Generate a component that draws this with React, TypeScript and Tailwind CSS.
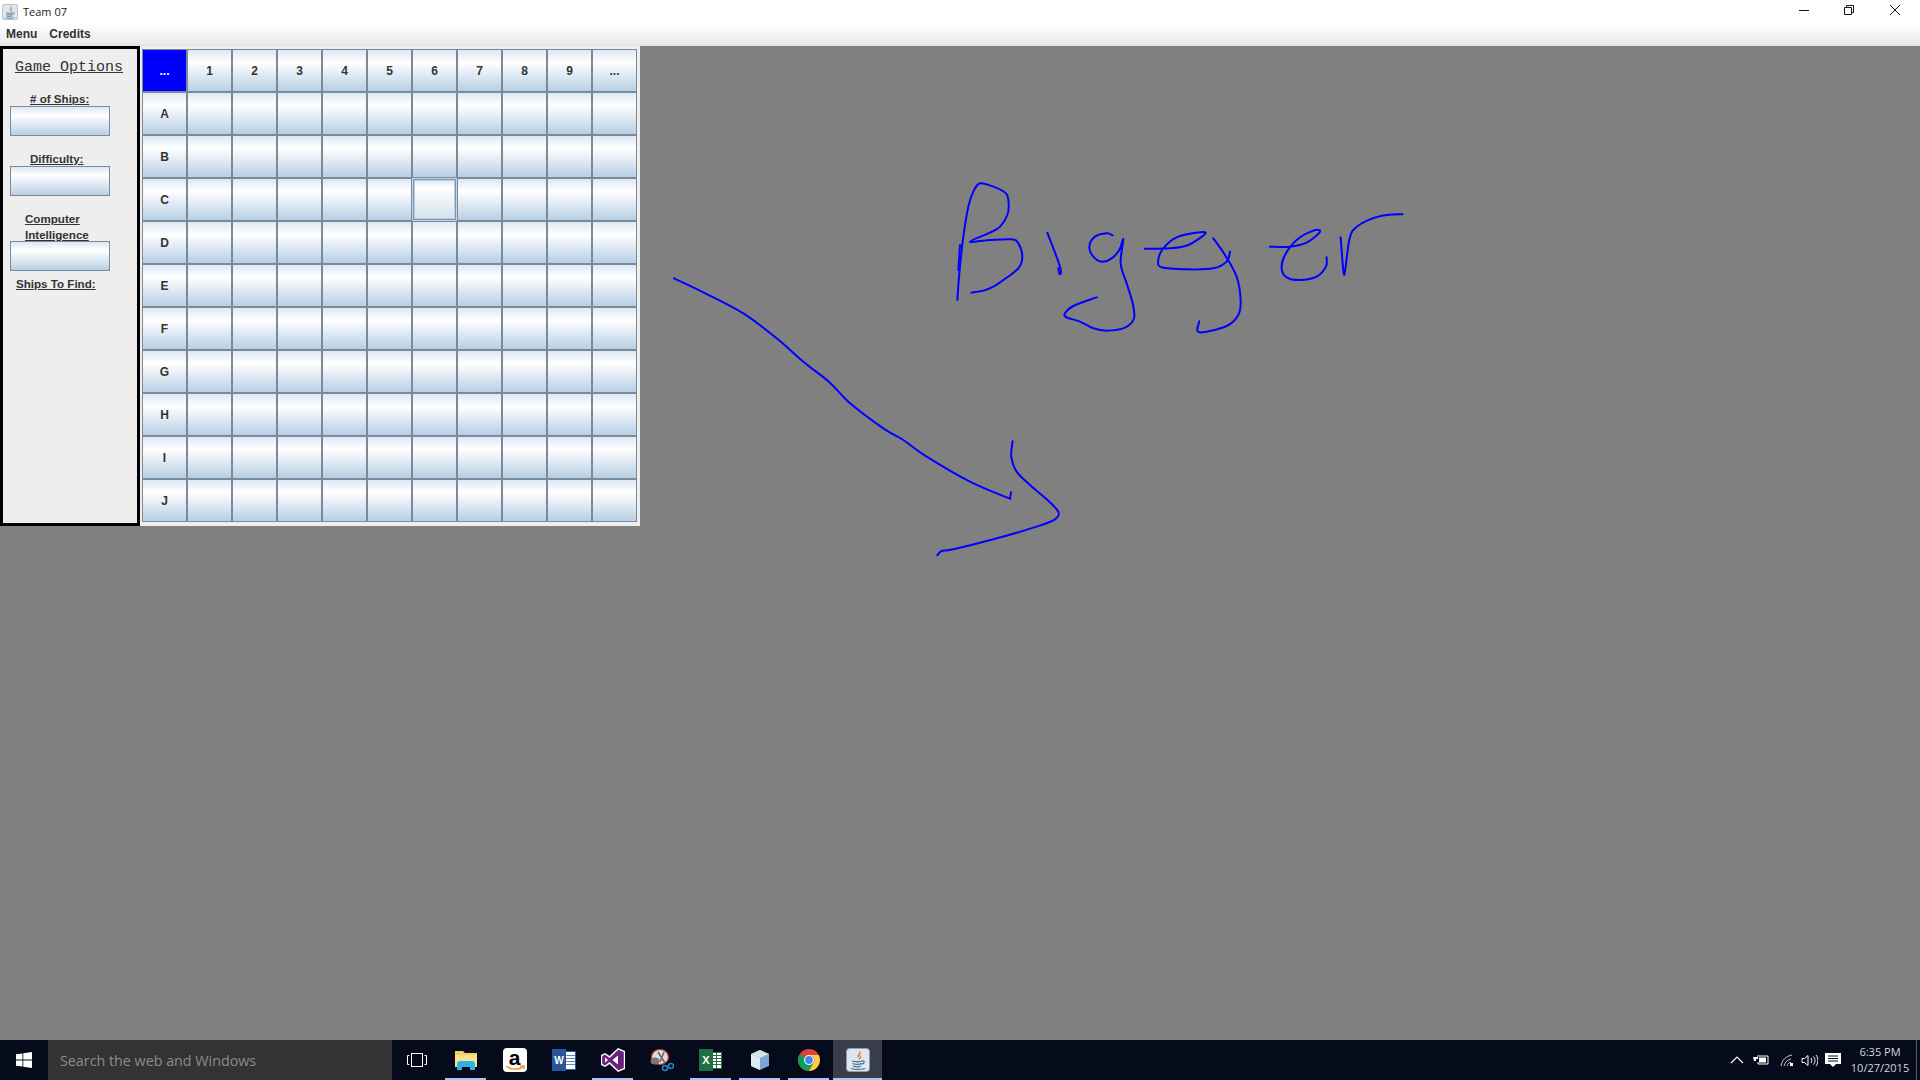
const rowLabels = ['A', 'B', 'C', 'D', 'E', 'F', 'G', 'H', 'I', 'J'];
const colLabels = ['1', '2', '3', '4', '5', '6', '7', '8', '9', '...'];

const oceanGradient = 'bg-[linear-gradient(180deg,#dde8f3_0%,#ffffff_30%,#b8cfe5_100%)]';

// Catmull-Rom through the traced points, so the ink does not look polygonal
function smooth(points: number[][]): string {
  let d = `M${points[0][0]} ${points[0][1]}`;
  for (let i = 0; i < points.length - 1; i++) {
    const p0 = points[i - 1] || points[i];
    const p1 = points[i];
    const p2 = points[i + 1];
    const p3 = points[i + 2] || p2;
    const c1x = p1[0] + (p2[0] - p0[0]) / 6;
    const c1y = p1[1] + (p2[1] - p0[1]) / 6;
    const c2x = p2[0] - (p3[0] - p1[0]) / 6;
    const c2y = p2[1] - (p3[1] - p1[1]) / 6;
    d += ` C${c1x} ${c1y} ${c2x} ${c2y} ${p2[0]} ${p2[1]}`;
  }
  return d;
}

const wordStrokes: number[][][] = [
  [[82, 420], [88, 340], [100, 230], [115, 140], [130, 95], [150, 70], [190, 80], [228, 100], [236, 130], [232, 165], [210, 200], [180, 218], [120, 245], [180, 240], [245, 238], [265, 250], [277, 290], [265, 325], [220, 360], [190, 380], [160, 392], [124, 398]],
  [[90, 255], [85, 330]],
  [[352, 218], [385, 305], [393, 335], [388, 342], [385, 325]],
  [[548, 226], [530, 220], [495, 230], [478, 260], [490, 290], [515, 305], [545, 295], [568, 270], [580, 238], [572, 310], [590, 370], [608, 430], [612, 475], [585, 503], [530, 512], [490, 505], [450, 485], [410, 472], [405, 460], [430, 438], [500, 412]],
  [[645, 266], [720, 265], [775, 255], [825, 222], [810, 217], [740, 232], [700, 265], [685, 300], [695, 322], [770, 328], [850, 325], [890, 305], [900, 275]],
  [[850, 235], [885, 285], [920, 350], [932, 420], [925, 465], [890, 498], [808, 517], [808, 484]],
  [[1020, 260], [1080, 260], [1130, 248], [1170, 215], [1150, 212], [1100, 240], [1065, 285], [1055, 325], [1070, 352], [1110, 360], [1160, 350], [1188, 320], [1190, 292]],
  [[1232, 232], [1240, 330], [1245, 335], [1258, 240], [1275, 205], [1320, 178], [1370, 165], [1418, 163]],
];

const arrowStrokes: number[][][] = [
  [[42, 55], [130, 97], [250, 160], [350, 235], [430, 305], [510, 368], [565, 425], [670, 505], [730, 540], [800, 590], [930, 665], [1040, 712], [1050, 712], [1053, 697]],
  [[1058, 544], [1054, 590], [1070, 635], [1110, 675], [1160, 718], [1195, 755], [1185, 778], [1130, 800], [1000, 838], [880, 868], [845, 873], [832, 886]],
];

function JavaIcon({ size }: { size: number }) {
  return (
    <svg width={size} height={size} viewBox="0 0 24 24">
      <rect x="0.5" y="0.5" width="23" height="23" rx="3" fill="#dfe6ee" stroke="#8aa0b8" />
      <path d="M13 3c2 3-3 4-1 7 .5-2 4-3 2-7z" fill="#e8761c" />
      <path d="M15 7c0 2-3 3-2 5 .5-1 3-2 2-5z" fill="#d9531e" />
      <path d="M6 13c3 1 8 1 10 0M6.500 15.500c3 1 7 1 9 0M7 18c2 .8 6 .8 8 0" fill="none" stroke="#4a7196" strokeWidth="1.300" />
      <path d="M16 13c3-1 3 3-1 3" fill="none" stroke="#4a7196" strokeWidth="1.200" />
      <path d="M5 20.500c3 1.200 11 1.200 14 0" fill="none" stroke="#4a7196" strokeWidth="1.200" />
    </svg>
  );
}

function Cell({ label, selected, focused }: { label?: string; selected?: boolean; focused?: boolean }) {
  if (selected) {
    return (
      <div className="flex items-center justify-center bg-[#0000ff] text-[12px] font-bold text-white">{label}</div>
    );
  }
  if (focused) {
    return (
      <div className="relative z-10 bg-[linear-gradient(180deg,#dde8f3_0%,#ffffff_20%,#d3e0ee_100%)] border border-[#7f96b3] shadow-[0_0_0_1px_#c3d3e4,inset_0_0_0_1px_#b9cde3]" />
    );
  }
  return (
    <div className={`${oceanGradient} flex items-center justify-center text-[12px] font-bold text-[#333333]`}>{label}</div>
  );
}

function SideLabel({ className, children }: { className: string; children: string }) {
  return <div className={`text-[11.6px] leading-[15px] font-bold text-[#333333] underline ${className}`}>{children}</div>;
}

function EmptyBox() {
  return <div className={`ml-[7px] h-[30px] w-[100px] shrink-0 border border-[#7a8a99] ${oceanGradient}`} />;
}

function TaskIcon({ active, open, children }: { active?: boolean; open?: boolean; children: React.ReactNode }) {
  return (
    <div className={`relative flex h-[40px] w-[49px] shrink-0 items-center justify-center ${active ? 'bg-[#3a3e4b]' : ''}`}>
      {children}
      {(open || active) && (
        <div className={`absolute bottom-0 h-[2px] bg-[#a9c4f5] ${active ? 'inset-x-0' : 'inset-x-[4px]'}`} />
      )}
    </div>
  );
}

export default function App() {
  return (
    <div className="relative flex h-[1080px] w-[1920px] flex-col overflow-hidden bg-[#808080] font-['Liberation_Sans',sans-serif]">
      {/* Title bar */}
      <div className="flex h-[24px] shrink-0 items-center bg-white pl-[2px]">
        <JavaIcon size={16} />
        <span className="ml-[5px] font-['Open_Sans',sans-serif] text-[11px] text-[#222222]">Team 07</span>
        <div className="ml-auto flex items-center pb-[4px]">
          <svg width="10" height="10" viewBox="0 0 10 10" className="mr-[35px]">
            <path d="M0 5.500h10" stroke="#111" strokeWidth="1" />
          </svg>
          <svg width="10" height="10" viewBox="0 0 10 10" className="mr-[36px]">
            <path d="M.5 2.500h7v7h-7zM2.500 2.500v-2h7v7h-2" fill="none" stroke="#111" strokeWidth="1" />
          </svg>
          <svg width="10" height="10" viewBox="0 0 10 10" className="mr-[20px]">
            <path d="M0 0l10 10M10 0L0 10" stroke="#111" strokeWidth="1" />
          </svg>
        </div>
      </div>

      {/* Menu bar */}
      <div className="flex h-[20px] shrink-0 items-center gap-[12px] bg-[linear-gradient(180deg,#ffffff_0%,#e9e9e9_100%)] pl-[6px] text-[12px] font-bold text-[#333333]">
        <span>Menu</span>
        <span>Credits</span>
      </div>
      <div className="h-[2px] shrink-0 bg-[#e4e4e4]" />

      {/* Game frame */}
      <div className="flex h-[480px] w-[640px] shrink-0 bg-[#eeeeee]">
        <div className="flex h-[480px] w-[140px] shrink-0 flex-col border-[3px] border-black">
          <div className="mt-[11px] ml-[12px] h-[16px] font-['Liberation_Mono',monospace] text-[15px] leading-[16px] text-[#333333] underline">
            Game Options
          </div>
          <SideLabel className="mt-[15px] ml-[27px] h-[15px]"># of Ships:</SideLabel>
          <EmptyBox />
          <SideLabel className="mt-[15px] ml-[27px] h-[15px]">Difficulty:</SideLabel>
          <EmptyBox />
          <SideLabel className="mt-[15px] ml-[22px] h-[16px]">Computer</SideLabel>
          <SideLabel className="ml-[22px] h-[14px]">Intelligence</SideLabel>
          <EmptyBox />
          <SideLabel className="mt-[5px] ml-[13px] h-[15px]">Ships To Find:</SideLabel>
        </div>

        <div className="mt-[3px] ml-[2px] grid h-[473px] w-[495px] grid-cols-[repeat(11,43px)] grid-rows-[repeat(11,41px)] gap-[2px] border border-[#7a8a99] bg-[#7a8a99]">
          <Cell label="..." selected />
          {colLabels.map((label) => (
            <Cell key={label} label={label} />
          ))}
          {rowLabels.map((row) => (
            <div key={row} className="contents">
              <Cell label={row} />
              {colLabels.map((col) => (
                <Cell key={col} focused={row === 'C' && col === '6'} />
              ))}
            </div>
          ))}
        </div>
      </div>

      <div className="flex-1" />

      {/* Hand drawn ink over the empty area */}
      <svg className="pointer-events-none absolute top-0 left-0" width="1920" height="1080" fill="none" stroke="#0000ff" strokeLinecap="round" strokeLinejoin="round">
        <g transform="translate(930 160) scale(0.3333)" strokeWidth="6">
          {wordStrokes.map((s, i) => (
            <path key={i} d={smooth(s)} />
          ))}
        </g>
        <g transform="translate(660 260) scale(0.3333)" strokeWidth="6">
          {arrowStrokes.map((s, i) => (
            <path key={i} d={smooth(s)} />
          ))}
        </g>
      </svg>

      {/* Taskbar */}
      <div className="flex h-[40px] shrink-0 items-center bg-[#050b1b]">
        <div className="flex h-[40px] w-[48px] shrink-0 items-center justify-center">
          <svg width="16" height="16" viewBox="0 0 16 16" fill="#ffffff">
            <path d="M0 2.300l6.500-.9v6.200H0zM7.300 1.300L16 0v7.600H7.300zM0 8.400h6.500v6.200L0 13.700zM7.300 8.400H16V16l-8.700-1.300z" />
          </svg>
        </div>
        <div className="flex h-[40px] w-[344px] shrink-0 items-center bg-[#333333] pt-[1px] pl-[12px] font-['Open_Sans',sans-serif] text-[14.300px] text-[#8c8c8c]">
          Search the web and Windows
        </div>
        <div className="flex h-[40px] w-[49px] shrink-0 items-center justify-center">
          <svg width="20" height="14" viewBox="0 0 20 14" fill="none" stroke="#ffffff" strokeWidth="1">
            <rect x="4.500" y="0.500" width="11" height="13" />
            <path d="M2.500 2.500h-2v9h2M17.500 2.500h2v9h-2" />
          </svg>
        </div>

        <TaskIcon open>
          <svg width="22" height="20" viewBox="0 0 22 20">
            <path d="M0 1h8l2 2h12v14H0z" fill="#f4cf63" />
            <path d="M0 5h22v12H0z" fill="#fbe08d" />
            <path d="M4 11h14l2 2v7h-5v-3H7v3H2v-7z" fill="#27b5e8" />
          </svg>
        </TaskIcon>
        <TaskIcon>
          <div className="relative flex h-[24px] w-[24px] flex-col items-center rounded-[4px] bg-white">
            <span className="font-['Liberation_Sans',sans-serif] text-[21px] leading-[20px] font-bold text-black">a</span>
            <svg className="absolute bottom-[1px]" width="20" height="6" viewBox="0 0 20 6" fill="none" stroke="#f59a23" strokeWidth="1.500">
              <path d="M1 1c5 4 12 4 17 1" />
              <path d="M15 1h4v3" />
            </svg>
          </div>
        </TaskIcon>
        <TaskIcon>
          <div className="relative flex h-[22px] w-[23px] items-center">
            <div className="ml-[8px] h-[17px] w-[15px] bg-[linear-gradient(180deg,#ffffff_0_3px,#5f85bd_3px_4px,#ffffff_4px_6px,#5f85bd_6px_7px,#ffffff_7px_9px,#5f85bd_9px_10px,#ffffff_10px_12px,#5f85bd_12px_13px,#ffffff_13px)] outline outline-[#2b579a]" />
            <div className="absolute top-0 left-0 flex h-[22px] w-[14px] items-center justify-center bg-[#2b579a] text-[10px] font-bold text-white">W</div>
          </div>
        </TaskIcon>
        <TaskIcon open>
          <svg width="24" height="24" viewBox="0 0 24 24">
            <path d="M17 0l7 3v18l-7 3-8.500-8L4 19l-4-2V7l4-2 4.500 3z" fill="#ffffff" />
            <path d="M17.300 1.800L22.800 4v16l-5.500 2.200-8.700-8.200L4 17.500 1.200 16V8L4 6.500 8.600 10z" fill="#68217a" />
            <path d="M17 7.500v9L11.500 12zM4 9.500L7 12l-3 2.500z" fill="#ffffff" />
          </svg>
        </TaskIcon>
        <TaskIcon>
          <svg width="24" height="24" viewBox="0 0 24 24">
            <ellipse cx="10" cy="9" rx="8.500" ry="7.500" fill="#dddddd" stroke="#c0392b" strokeWidth="1.200" />
            <ellipse cx="5" cy="13" rx="4.500" ry="3.500" fill="#777777" />
            <path d="M8 4l7 11M14 4l-4 10" stroke="#666666" strokeWidth="1.500" />
            <circle cx="15" cy="20" r="2.500" fill="none" stroke="#1e88c9" strokeWidth="1.500" />
            <circle cx="21" cy="18" r="2.500" fill="none" stroke="#1e88c9" strokeWidth="1.500" />
          </svg>
        </TaskIcon>
        <TaskIcon open>
          <div className="relative flex h-[22px] w-[23px] items-center">
            <div className="ml-[8px] grid h-[17px] w-[15px] grid-cols-3 gap-px bg-[#1f7145] p-px">
              {Array.from({ length: 15 }).map((_, i) => (
                <div key={i} className="bg-white" />
              ))}
            </div>
            <div className="absolute top-0 left-0 flex h-[22px] w-[14px] items-center justify-center bg-[#1f7145] text-[11px] font-bold text-white">X</div>
          </div>
        </TaskIcon>
        <TaskIcon open>
          <svg width="24" height="24" viewBox="0 0 24 24">
            <path d="M12 2l9 4v12l-9 4-9-4V6z" fill="#7fa4d8" />
            <path d="M12 2l9 4-9 4-9-4z" fill="#cfe6d8" />
            <path d="M3 6l9 4v12l-9-4z" fill="#dfe9f6" />
          </svg>
        </TaskIcon>
        <TaskIcon open>
          <svg width="22" height="22" viewBox="0 0 22 22">
            <circle cx="11" cy="11" r="11" fill="#db4437" />
            <path d="M11 11L1.500 5.500A11 11 0 0 0 11 22l5-9z" fill="#0f9d58" />
            <path d="M11 6h9.700A11 11 0 0 1 11 22l5-9a5 5 0 0 0-5-7z" fill="#ffcd40" />
            <circle cx="11" cy="11" r="5" fill="#ffffff" />
            <circle cx="11" cy="11" r="3.900" fill="#4285f4" />
          </svg>
        </TaskIcon>
        <TaskIcon active>
          <JavaIcon size={24} />
        </TaskIcon>

        {/* Tray */}
        <div className="ml-auto flex h-[40px] items-center">
          <svg width="14" height="8" viewBox="0 0 14 8" fill="none" stroke="#ffffff" strokeWidth="1.200" className="mr-[9px]">
            <path d="M1 7l6-6 6 6" />
          </svg>
          <svg width="16" height="12" viewBox="0 0 16 12" className="mr-[11px]">
            <path d="M1 0v3M4 0v3M0 3h5v2H3v2H1z" fill="#ffffff" />
            <path d="M4 2h11v8H5V8" fill="none" stroke="#ffffff" />
            <rect x="6" y="3.500" width="7" height="5" fill="#ffffff" />
          </svg>
          <svg width="14" height="13" viewBox="0 0 14 13" fill="none" stroke="#c8c8c8" className="mr-[7px]">
            <path d="M1 12C2 6 6 2 12 1M4 12c1-4 3-6 7-7M7 12c.5-2 1-3 4-4" />
            <rect x="10" y="9" width="3" height="3" fill="#ffffff" stroke="none" />
          </svg>
          <svg width="17" height="13" viewBox="0 0 17 13" fill="none" stroke="#ffffff" className="mr-[7px]">
            <path d="M1 4.500h2.500L7 1.500v10l-3.500-3H1z" />
            <path d="M10 4c1 1.500 1 3.500 0 5M12.500 2.500c2 2.500 2 5.500 0 8M15 1c2.500 3.500 2.500 7.500 0 11" />
          </svg>
          <svg width="16" height="16" viewBox="0 0 16 16" className="mr-[7px]">
            <path d="M0 1h16v11h-5l-3 3-3-3H0z" fill="#ffffff" />
            <path d="M3 4h10M3 6.500h10M3 9h10" stroke="#050b1b" />
          </svg>
          <div className="flex w-[64px] flex-col items-center font-['Open_Sans',sans-serif] text-[11px] leading-[16px] text-[#d8d8d8]">
            <span>6:35 PM</span>
            <span>10/27/2015</span>
          </div>
          <div className="mr-[3px] ml-[4px] h-[40px] w-px bg-[#555a66]" />
        </div>
      </div>
    </div>
  );
}
